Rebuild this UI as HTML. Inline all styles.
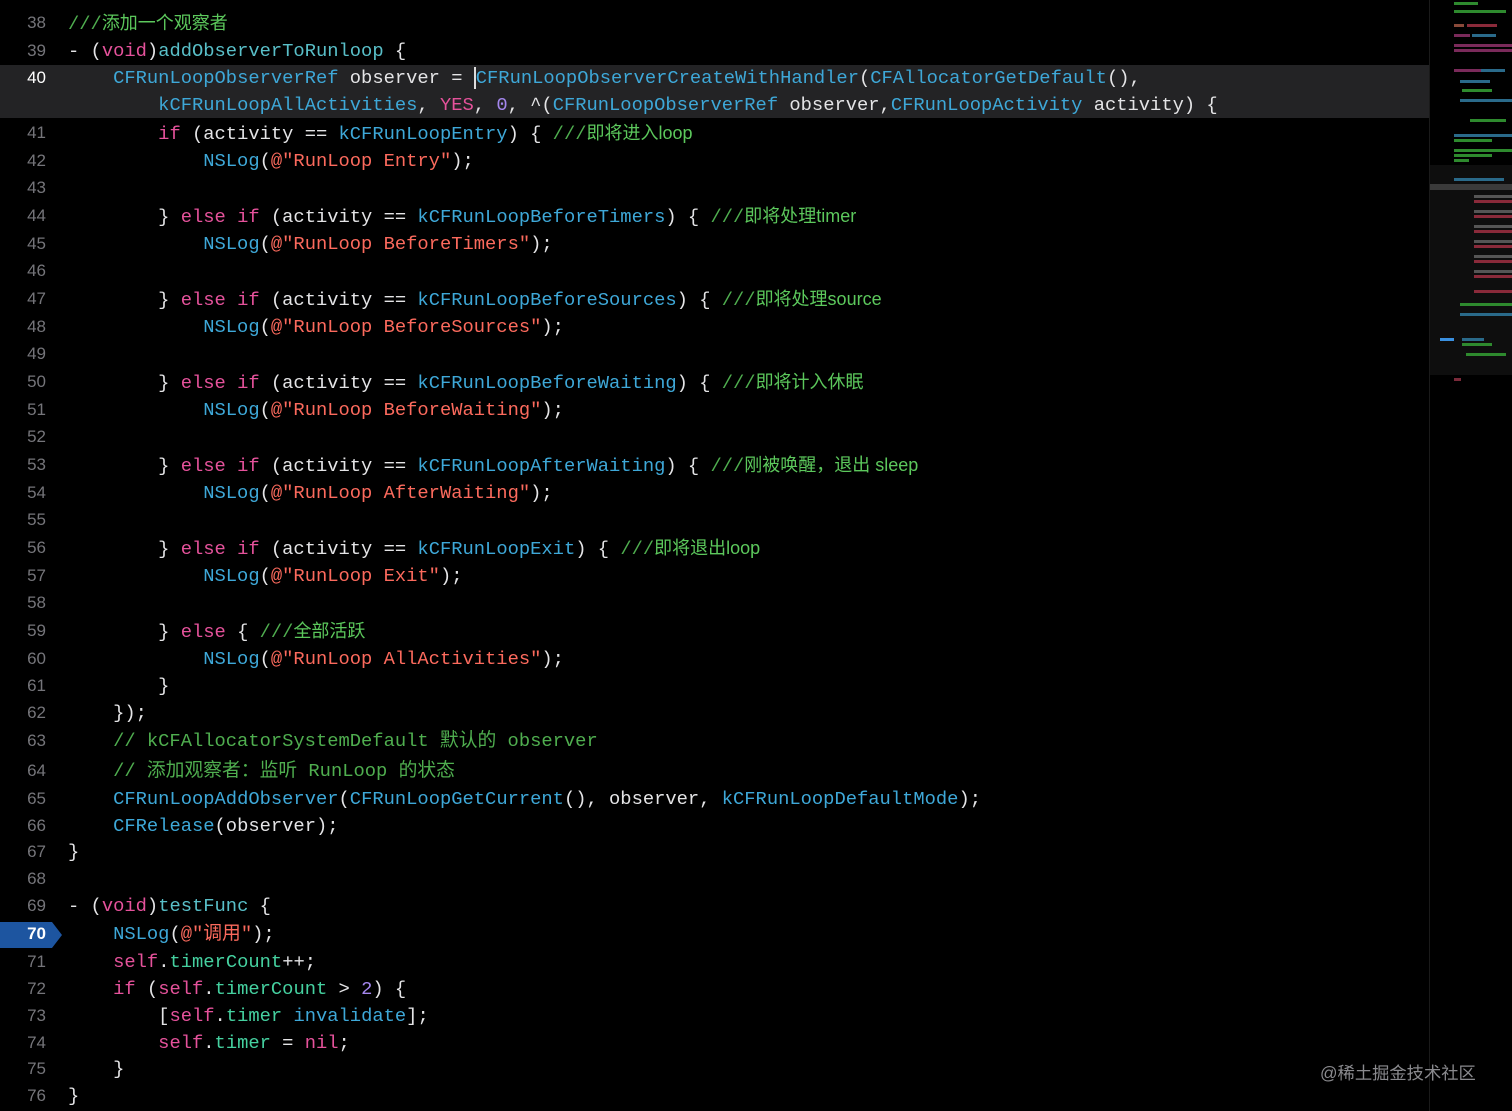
<!DOCTYPE html>
<html><head><meta charset="utf-8"><style>
body{margin:0;background:#000;width:1512px;height:1111px;overflow:hidden;position:relative;font-family:"Liberation Mono","Noto Sans CJK SC",monospace;}
.hl{position:absolute;left:0;top:65px;width:1430px;height:53px;background:#232325;}
.ln{position:absolute;left:0;width:46px;text-align:right;color:#75757a;font-size:17px;font-family:"Liberation Sans",sans-serif;line-height:20px;}
.ln.cur{color:#fff;}
.c{position:absolute;left:68px;white-space:pre;font-size:18.8px;line-height:22px;color:#e4e4e6;}
.k{color:#e5529b}.t{color:#3ea8d8}.s{color:#fc6a5d}.n{color:#a487ee}.cm{color:#4fae4f}
.cz{color:#5cc85c;font-family:"Liberation Sans","Noto Sans CJK SC",sans-serif;font-size:18px}
.m{color:#59bfc8}.pr{color:#45d1a0}
.bp{position:absolute;left:0;top:922px;height:26px;background:#1d55a0;clip-path:polygon(0 0,52px 0,62px 13px,52px 26px,0 26px);width:62px;}
.bpn{position:absolute;left:0;top:924px;width:46px;text-align:right;color:#fff;font-size:17px;font-family:"Liberation Sans",sans-serif;font-weight:bold}
.sep{position:absolute;left:1429px;top:0;width:1px;height:1111px;background:#1a1a1a}
.mm{position:absolute;left:1430px;top:0;width:82px;height:1111px;background:#000}
.mmv{position:absolute;left:1430px;top:165px;width:82px;height:210px;background:#0e0e0e}
.b{position:absolute;height:3px}
.wm{position:absolute;left:1320px;top:1059px;color:#8a8a8e;font-family:"Liberation Sans","Noto Sans CJK SC",sans-serif;font-size:17.3px}
</style></head><body>
<div class="hl"></div>
<div class="sep"></div>
<div class="mm"></div><div class="mmv"></div>
<div class="b" style="left:1454px;top:2px;width:24px;background:#2e8a2e"></div>
<div class="b" style="left:1454px;top:10px;width:52px;background:#2e8a2e"></div>
<div class="b" style="left:1454px;top:24px;width:10px;background:#8a4a3a"></div><div class="b" style="left:1467px;top:24px;width:30px;background:#8a2a3a"></div>
<div class="b" style="left:1454px;top:34px;width:16px;background:#7a2a5a"></div><div class="b" style="left:1472px;top:34px;width:24px;background:#2a6a8a"></div>
<div class="b" style="left:1454px;top:44px;width:58px;background:#7a2a5a"></div><div class="b" style="left:1454px;top:49px;width:58px;background:#7a2a5a"></div>
<div class="b" style="left:1454px;top:69px;width:28px;background:#7a2a5a"></div><div class="b" style="left:1481px;top:69px;width:24px;background:#2a6a8a"></div>
<div class="b" style="left:1460px;top:80px;width:30px;background:#2a6a8a"></div><div class="b" style="left:1462px;top:89px;width:30px;background:#2e8a2e"></div>
<div class="b" style="left:1460px;top:99px;width:52px;background:#2a6a8a"></div><div class="b" style="left:1470px;top:119px;width:36px;background:#2e8a2e"></div>
<div class="b" style="left:1454px;top:134px;width:58px;background:#2a6a8a"></div><div class="b" style="left:1454px;top:139px;width:38px;background:#2e8a2e"></div>
<div class="b" style="left:1454px;top:149px;width:58px;background:#2e8a2e"></div><div class="b" style="left:1454px;top:154px;width:38px;background:#2e8a2e"></div>
<div class="b" style="left:1454px;top:159px;width:15px;background:#2e8a2e"></div>
<div class="b" style="left:1454px;top:178px;width:50px;background:#2a6a8a"></div>
<div class="b" style="left:1430px;top:184px;width:82px;height:6px;background:#3a3a3a"></div>
<div class="b" style="left:1474px;top:195px;width:38px;background:#555"></div><div class="b" style="left:1474px;top:200px;width:38px;background:#8a2a3a"></div>
<div class="b" style="left:1474px;top:210px;width:38px;background:#555"></div><div class="b" style="left:1474px;top:215px;width:38px;background:#8a2a3a"></div>
<div class="b" style="left:1474px;top:225px;width:38px;background:#555"></div><div class="b" style="left:1474px;top:230px;width:38px;background:#8a2a3a"></div>
<div class="b" style="left:1474px;top:240px;width:38px;background:#555"></div><div class="b" style="left:1474px;top:245px;width:38px;background:#8a2a3a"></div>
<div class="b" style="left:1474px;top:255px;width:38px;background:#555"></div><div class="b" style="left:1474px;top:260px;width:38px;background:#8a2a3a"></div>
<div class="b" style="left:1474px;top:270px;width:38px;background:#555"></div><div class="b" style="left:1474px;top:275px;width:38px;background:#8a2a3a"></div>
<div class="b" style="left:1474px;top:290px;width:38px;background:#8a2a3a"></div>
<div class="b" style="left:1460px;top:303px;width:52px;background:#2e8a2e"></div><div class="b" style="left:1460px;top:313px;width:52px;background:#2a6a8a"></div>
<div class="b" style="left:1440px;top:338px;width:14px;height:3px;background:#3a90e0"></div>
<div class="b" style="left:1462px;top:338px;width:22px;background:#2a6a8a"></div><div class="b" style="left:1462px;top:343px;width:30px;background:#2e8a2e"></div>
<div class="b" style="left:1466px;top:353px;width:40px;background:#2e8a2e"></div>
<div class="b" style="left:1454px;top:378px;width:7px;background:#7a2a3a"></div>

<div class="ln" style="top:13px">38</div><div class="c" style="top:12px"><span class="cm">///</span><span class="cz">添加一个观察者</span></div>
<div class="ln" style="top:41px">39</div><div class="c" style="top:40px">- (<span class="k">void</span>)<span class="m">addObserverToRunloop</span> {</div>
<div class="ln cur" style="top:68px">40</div><div class="c" style="top:67px">    <span class="t">CFRunLoopObserverRef</span> observer = <span style="border-left:2px solid #ddd"></span><span class="t">CFRunLoopObserverCreateWithHandler</span>(<span class="t">CFAllocatorGetDefault</span>(),</div>
<div class="c" style="top:94px">        <span class="t">kCFRunLoopAllActivities</span>, <span class="k">YES</span>, <span class="n">0</span>, ^(<span class="t">CFRunLoopObserverRef</span> observer,<span class="t">CFRunLoopActivity</span> activity) {</div>
<div class="ln" style="top:123px">41</div><div class="c" style="top:122px">        <span class="k">if</span> (activity == <span class="t">kCFRunLoopEntry</span>) { <span class="cm">///</span><span class="cz">即将进入loop</span></div>
<div class="ln" style="top:151px">42</div><div class="c" style="top:150px">            <span class="t">NSLog</span>(<span class="s">@"RunLoop Entry"</span>);</div>
<div class="ln" style="top:178px">43</div>
<div class="ln" style="top:206px">44</div><div class="c" style="top:205px">        } <span class="k">else if</span> (activity == <span class="t">kCFRunLoopBeforeTimers</span>) { <span class="cm">///</span><span class="cz">即将处理timer</span></div>
<div class="ln" style="top:234px">45</div><div class="c" style="top:233px">            <span class="t">NSLog</span>(<span class="s">@"RunLoop BeforeTimers"</span>);</div>
<div class="ln" style="top:261px">46</div>
<div class="ln" style="top:289px">47</div><div class="c" style="top:288px">        } <span class="k">else if</span> (activity == <span class="t">kCFRunLoopBeforeSources</span>) { <span class="cm">///</span><span class="cz">即将处理source</span></div>
<div class="ln" style="top:317px">48</div><div class="c" style="top:316px">            <span class="t">NSLog</span>(<span class="s">@"RunLoop BeforeSources"</span>);</div>
<div class="ln" style="top:344px">49</div>
<div class="ln" style="top:372px">50</div><div class="c" style="top:371px">        } <span class="k">else if</span> (activity == <span class="t">kCFRunLoopBeforeWaiting</span>) { <span class="cm">///</span><span class="cz">即将计入休眠</span></div>
<div class="ln" style="top:400px">51</div><div class="c" style="top:399px">            <span class="t">NSLog</span>(<span class="s">@"RunLoop BeforeWaiting"</span>);</div>
<div class="ln" style="top:427px">52</div>
<div class="ln" style="top:455px">53</div><div class="c" style="top:454px">        } <span class="k">else if</span> (activity == <span class="t">kCFRunLoopAfterWaiting</span>) { <span class="cm">///</span><span class="cz">刚被唤醒，退出 sleep</span></div>
<div class="ln" style="top:483px">54</div><div class="c" style="top:482px">            <span class="t">NSLog</span>(<span class="s">@"RunLoop AfterWaiting"</span>);</div>
<div class="ln" style="top:510px">55</div>
<div class="ln" style="top:538px">56</div><div class="c" style="top:537px">        } <span class="k">else if</span> (activity == <span class="t">kCFRunLoopExit</span>) { <span class="cm">///</span><span class="cz">即将退出loop</span></div>
<div class="ln" style="top:566px">57</div><div class="c" style="top:565px">            <span class="t">NSLog</span>(<span class="s">@"RunLoop Exit"</span>);</div>
<div class="ln" style="top:593px">58</div>
<div class="ln" style="top:621px">59</div><div class="c" style="top:620px">        } <span class="k">else</span> { <span class="cm">///</span><span class="cz">全部活跃</span></div>
<div class="ln" style="top:649px">60</div><div class="c" style="top:648px">            <span class="t">NSLog</span>(<span class="s">@"RunLoop AllActivities"</span>);</div>
<div class="ln" style="top:676px">61</div><div class="c" style="top:675px">        }</div>
<div class="ln" style="top:703px">62</div><div class="c" style="top:702px">    });</div>
<div class="ln" style="top:731px">63</div><div class="c cm" style="top:730px">    // kCFAllocatorSystemDefault 默认的 observer</div>
<div class="ln" style="top:761px">64</div><div class="c cm" style="top:760px">    // 添加观察者：监听 RunLoop 的状态</div>
<div class="ln" style="top:789px">65</div><div class="c" style="top:788px">    <span class="t">CFRunLoopAddObserver</span>(<span class="t">CFRunLoopGetCurrent</span>(), observer, <span class="t">kCFRunLoopDefaultMode</span>);</div>
<div class="ln" style="top:816px">66</div><div class="c" style="top:815px">    <span class="t">CFRelease</span>(observer);</div>
<div class="ln" style="top:842px">67</div><div class="c" style="top:841px">}</div>
<div class="ln" style="top:869px">68</div>
<div class="ln" style="top:896px">69</div><div class="c" style="top:895px">- (<span class="k">void</span>)<span class="m">testFunc</span> {</div>
<div class="bp"></div><div class="bpn">70</div><div class="c" style="top:923px">    <span class="t">NSLog</span>(<span class="s">@"调用"</span>);</div>
<div class="ln" style="top:952px">71</div><div class="c" style="top:951px">    <span class="k">self</span>.<span class="pr">timerCount</span>++;</div>
<div class="ln" style="top:979px">72</div><div class="c" style="top:978px">    <span class="k">if</span> (<span class="k">self</span>.<span class="pr">timerCount</span> &gt; <span class="n">2</span>) {</div>
<div class="ln" style="top:1006px">73</div><div class="c" style="top:1005px">        [<span class="k">self</span>.<span class="pr">timer</span> <span class="t">invalidate</span>];</div>
<div class="ln" style="top:1033px">74</div><div class="c" style="top:1032px">        <span class="k">self</span>.<span class="pr">timer</span> = <span class="k">nil</span>;</div>
<div class="ln" style="top:1059px">75</div><div class="c" style="top:1058px">    }</div>
<div class="ln" style="top:1086px">76</div><div class="c" style="top:1085px">}</div>
<div class="wm">@稀土掘金技术社区</div>
</body></html>
